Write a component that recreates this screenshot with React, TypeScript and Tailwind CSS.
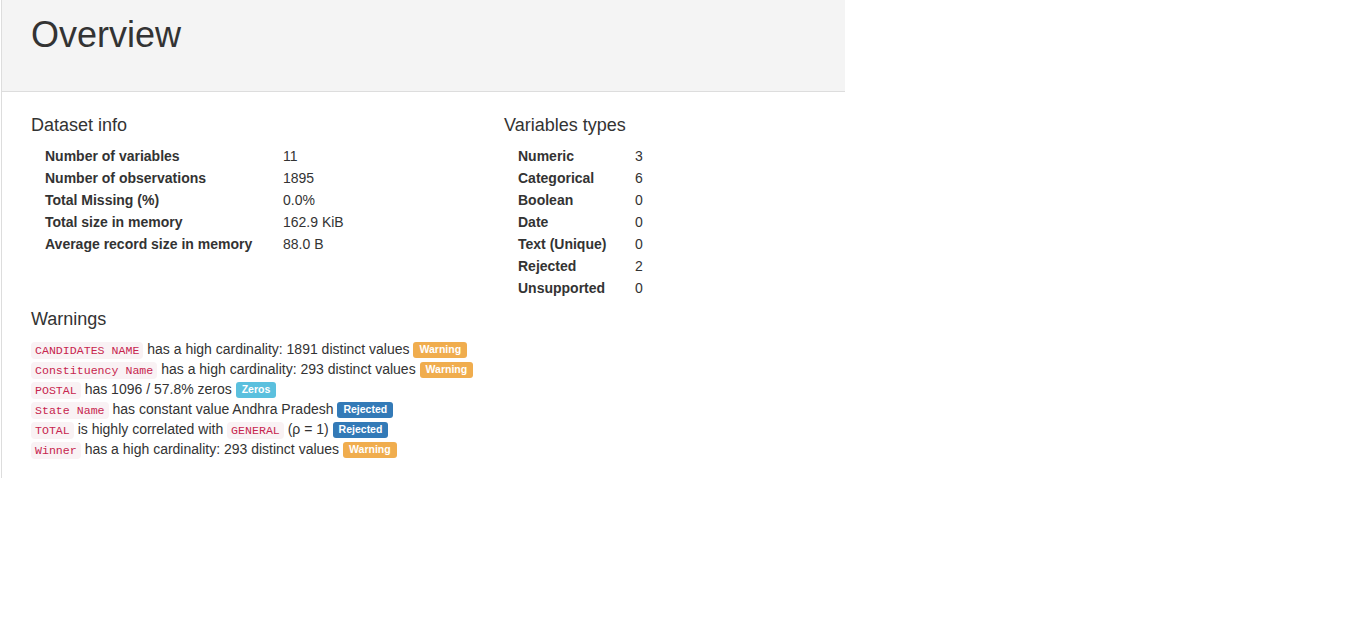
import React from "react";

const Code = ({ children }: { children: React.ReactNode }) => (
  <code className="rounded-[4px] bg-[#f9f2f4] px-[4px] py-[2px] text-[11.6px] leading-none text-[#c7254e] [font-family:'Liberation_Mono',monospace]">
    {children}
  </code>
);

const Label = ({ kind, children }: { kind: "warning" | "info" | "primary"; children: React.ReactNode }) => {
  const bg =
    kind === "warning" ? "bg-[#f0ad4e]" : kind === "info" ? "bg-[#5bc0de]" : "bg-[#337ab7]";
  return (
    <span
      className={`${bg} inline-block rounded-[3px] px-[6px] pt-[2px] pb-[3px] align-[1px] text-[10.5px] font-bold leading-none text-white`}
    >
      {children}
    </span>
  );
};

const datasetInfo: [string, string][] = [
  ["Number of variables", "11"],
  ["Number of observations", "1895"],
  ["Total Missing (%)", "0.0%"],
  ["Total size in memory", "162.9 KiB"],
  ["Average record size in memory", "88.0 B"],
];

const varTypes: [string, string][] = [
  ["Numeric", "3"],
  ["Categorical", "6"],
  ["Boolean", "0"],
  ["Date", "0"],
  ["Text (Unique)", "0"],
  ["Rejected", "2"],
  ["Unsupported", "0"],
];

const Row = ({ children }: { children: React.ReactNode }) => (
  <div className="h-[20px] whitespace-nowrap leading-[20px]">{children}</div>
);

export default function App() {
  return (
    <div className="min-h-[623px] bg-white text-[14px] text-[#333] [font-family:'Liberation_Sans',Arial,sans-serif]">
      <div className="ml-[1px] w-[844px] border-l border-[#dddddd] pb-[19px]">
        <div className="h-[92px] border-b border-[#dddddd] bg-[#f4f4f4] pl-[29px] pt-[15px]">
          <h1 className="text-[36px] leading-[40px]">Overview</h1>
        </div>
        <div className="flex pl-[29px] pt-[23px]">
          <div className="w-[473px]">
            <h4 className="text-[18px] leading-[20px]">Dataset info</h4>
            <div className="mt-[10px] grid grid-cols-[238px_1fr] pl-[14px]">
              {datasetInfo.map(([k, v]) => (
                <React.Fragment key={k}>
                  <div className="h-[22px] font-bold leading-[22px]">{k}</div>
                  <div className="h-[22px] leading-[22px]">{v}</div>
                </React.Fragment>
              ))}
            </div>
          </div>
          <div>
            <h4 className="text-[18px] leading-[20px]">Variables types</h4>
            <div className="mt-[10px] grid grid-cols-[117px_1fr] pl-[14px]">
              {varTypes.map(([k, v]) => (
                <React.Fragment key={k}>
                  <div className="h-[22px] font-bold leading-[22px]">{k}</div>
                  <div className="h-[22px] leading-[22px]">{v}</div>
                </React.Fragment>
              ))}
            </div>
          </div>
        </div>
        <div className="mt-[10px] pl-[29px]">
          <h4 className="text-[18px] leading-[20px]">Warnings</h4>
          <div className="mt-[10px]">
            <Row>
              <Code>CANDIDATES NAME</Code> has a high cardinality: 1891 distinct values{" "}
              <Label kind="warning">Warning</Label>
            </Row>
            <Row>
              <Code>Constituency Name</Code> has a high cardinality: 293 distinct values{" "}
              <Label kind="warning">Warning</Label>
            </Row>
            <Row>
              <Code>POSTAL</Code> has 1096 / 57.8% zeros <Label kind="info">Zeros</Label>
            </Row>
            <Row>
              <Code>State Name</Code> has constant value Andhra Pradesh{" "}
              <Label kind="primary">Rejected</Label>
            </Row>
            <Row>
              <Code>TOTAL</Code> is highly correlated with <Code>GENERAL</Code> (ρ = 1){" "}
              <Label kind="primary">Rejected</Label>
            </Row>
            <Row>
              <Code>Winner</Code> has a high cardinality: 293 distinct values{" "}
              <Label kind="warning">Warning</Label>
            </Row>
          </div>
        </div>
      </div>
    </div>
  );
}
